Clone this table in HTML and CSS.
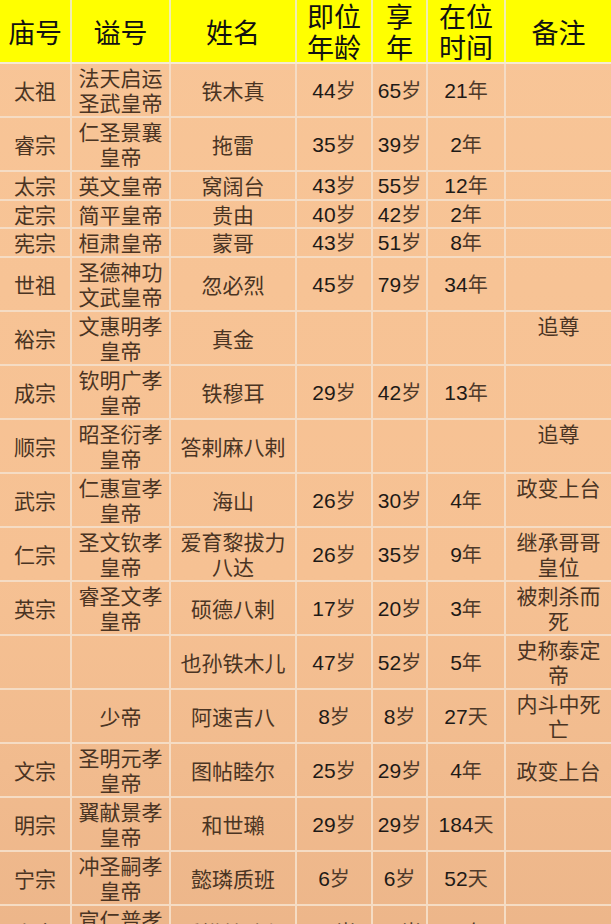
FILE: index.html
```html
<!DOCTYPE html>
<html lang="zh-CN">
<head>
<meta charset="utf-8">
<title>元朝皇帝表</title>
<link rel="stylesheet" href="styles.css">
</head>
<body>
<table class="emperors">
  <colgroup>
    <col class="c1"><col class="c2"><col class="c3"><col class="c4"><col class="c5"><col class="c6"><col class="c7">
  </colgroup>
  <thead>
    <tr>
      <th>庙号</th>
      <th>谥号</th>
      <th>姓名</th>
      <th>即位<br>年龄</th>
      <th>享<br>年</th>
      <th>在位<br>时间</th>
      <th>备注</th>
    </tr>
  </thead>
  <tbody>
    <tr class="tall"><td>太祖</td><td>法天启运<br>圣武皇帝</td><td>铁木真</td><td class="num">44<span class="u">岁</span></td><td class="num">65<span class="u">岁</span></td><td class="num">21<span class="u">年</span></td><td></td></tr>
    <tr class="tall"><td>睿宗</td><td>仁圣景襄<br>皇帝</td><td>拖雷</td><td class="num">35<span class="u">岁</span></td><td class="num">39<span class="u">岁</span></td><td class="num">2<span class="u">年</span></td><td></td></tr>
    <tr class="short"><td>太宗</td><td>英文皇帝</td><td>窝阔台</td><td class="num">43<span class="u">岁</span></td><td class="num">55<span class="u">岁</span></td><td class="num">12<span class="u">年</span></td><td></td></tr>
    <tr class="short"><td>定宗</td><td>简平皇帝</td><td>贵由</td><td class="num">40<span class="u">岁</span></td><td class="num">42<span class="u">岁</span></td><td class="num">2<span class="u">年</span></td><td></td></tr>
    <tr class="short"><td>宪宗</td><td>桓肃皇帝</td><td>蒙哥</td><td class="num">43<span class="u">岁</span></td><td class="num">51<span class="u">岁</span></td><td class="num">8<span class="u">年</span></td><td></td></tr>
    <tr class="tall"><td>世祖</td><td>圣德神功<br>文武皇帝</td><td>忽必烈</td><td class="num">45<span class="u">岁</span></td><td class="num">79<span class="u">岁</span></td><td class="num">34<span class="u">年</span></td><td></td></tr>
    <tr class="tall"><td>裕宗</td><td>文惠明孝<br>皇帝</td><td>真金</td><td></td><td></td><td></td><td class="top">追尊</td></tr>
    <tr class="tall"><td>成宗</td><td>钦明广孝<br>皇帝</td><td>铁穆耳</td><td class="num">29<span class="u">岁</span></td><td class="num">42<span class="u">岁</span></td><td class="num">13<span class="u">年</span></td><td></td></tr>
    <tr class="tall"><td>顺宗</td><td>昭圣衍孝<br>皇帝</td><td>答剌麻八剌</td><td></td><td></td><td></td><td class="top">追尊</td></tr>
    <tr class="tall"><td>武宗</td><td>仁惠宣孝<br>皇帝</td><td>海山</td><td class="num">26<span class="u">岁</span></td><td class="num">30<span class="u">岁</span></td><td class="num">4<span class="u">年</span></td><td class="top">政变上台</td></tr>
    <tr class="tall"><td>仁宗</td><td>圣文钦孝<br>皇帝</td><td>爱育黎拔力<br>八达</td><td class="num">26<span class="u">岁</span></td><td class="num">35<span class="u">岁</span></td><td class="num">9<span class="u">年</span></td><td>继承哥哥<br>皇位</td></tr>
    <tr class="tall"><td>英宗</td><td>睿圣文孝<br>皇帝</td><td>硕德八剌</td><td class="num">17<span class="u">岁</span></td><td class="num">20<span class="u">岁</span></td><td class="num">3<span class="u">年</span></td><td>被刺杀而<br>死</td></tr>
    <tr class="tall"><td></td><td></td><td>也孙铁木儿</td><td class="num">47<span class="u">岁</span></td><td class="num">52<span class="u">岁</span></td><td class="num">5<span class="u">年</span></td><td>史称泰定<br>帝</td></tr>
    <tr class="tall"><td></td><td>少帝</td><td>阿速吉八</td><td class="num">8<span class="u">岁</span></td><td class="num">8<span class="u">岁</span></td><td class="num">27<span class="u">天</span></td><td>内斗中死<br>亡</td></tr>
    <tr class="tall"><td>文宗</td><td>圣明元孝<br>皇帝</td><td>图帖睦尔</td><td class="num">25<span class="u">岁</span></td><td class="num">29<span class="u">岁</span></td><td class="num">4<span class="u">年</span></td><td>政变上台</td></tr>
    <tr class="tall"><td>明宗</td><td>翼献景孝<br>皇帝</td><td>和世瓎</td><td class="num">29<span class="u">岁</span></td><td class="num">29<span class="u">岁</span></td><td class="num">184<span class="u">天</span></td><td></td></tr>
    <tr class="tall"><td>宁宗</td><td>冲圣嗣孝<br>皇帝</td><td>懿璘质班</td><td class="num">6<span class="u">岁</span></td><td class="num">6<span class="u">岁</span></td><td class="num">52<span class="u">天</span></td><td></td></tr>
    <tr class="tall"><td>惠宗</td><td>宣仁普孝<br>皇帝</td><td>妥懽帖睦尔</td><td class="num">13<span class="u">岁</span></td><td class="num">51<span class="u">岁</span></td><td class="num">35<span class="u">年</span></td><td></td></tr>
  </tbody>
</table>
</body>
</html>
```

FILE: styles.css
```css
html, body {
  margin: 0;
  padding: 0;
  background: #f4be8f;
}

.emperors {
  width: 611px;
  table-layout: fixed;
  border-collapse: collapse;
  font-family: "Noto Sans CJK SC", sans-serif;
  background: linear-gradient(to bottom, #f8c597 0%, #f6c193 60%, #ecb589 100%);
}

.c1 { width: 71px; }
.c2 { width: 99px; }
.c3 { width: 126px; }
.c4 { width: 76px; }
.c5 { width: 55px; }
.c6 { width: 78px; }
.c7 { width: 106px; }

.emperors th,
.emperors td {
  border: 2px solid #f5dcc4;
  text-align: center;
  vertical-align: middle;
  padding: 0 3px;
}

.emperors tr > :first-child { border-left: none; }
.emperors tr > :last-child { border-right: none; }
.emperors thead th { border-top: none; }

.emperors th {
  background: #ffff00;
  color: #111111;
  font-weight: 400;
  font-size: 27px;
  line-height: 31px;
  height: 62px;
  padding: 0;
  border-color: #f2eeb0;
  border-bottom-color: #f6ead2;
}

.emperors td {
  color: #4a3423;
  font-size: 21px;
  line-height: 25px;
}

.emperors tr.tall { height: 54px; }
.emperors tr.short { height: 28.7px; }

.emperors td.top {
  vertical-align: top;
  padding-top: 1px;
}

.emperors td.num {
  font-family: "Liberation Sans", "Noto Sans CJK SC", sans-serif;
  font-size: 21px;
  color: #1e1a17;
}

.emperors td.num .u {
  font-family: "Noto Sans CJK SC", sans-serif;
  font-size: 20px;
  line-height: 1;
  color: #4f3a2a;
}
```
